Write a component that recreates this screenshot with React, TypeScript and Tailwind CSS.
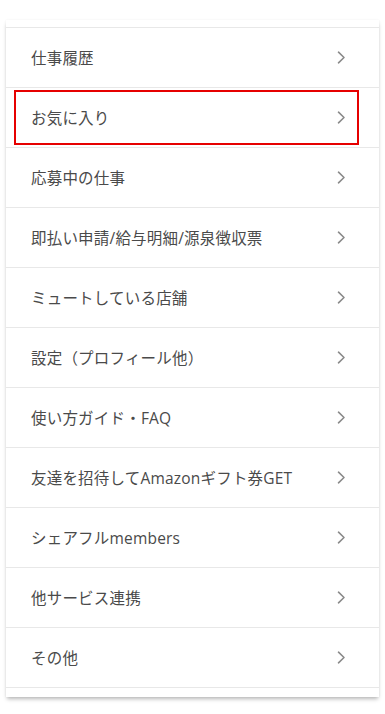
import React from 'react';

// menu rows in the account screen
const items: string[] = [
  '仕事履歴',
  'お気に入り',
  '応募中の仕事',
  '即払い申請/給与明細/源泉徴収票',
  'ミュートしている店舗',
  '設定（プロフィール他）',
  '使い方ガイド・FAQ',
  '友達を招待してAmazonギフト券GET',
  'シェアフルmembers',
  '他サービス連携',
  'その他',
];

const Chevron: React.FC = () => (
  <svg width="9" height="13" viewBox="0 0 9 13" fill="none" className="shrink-0">
    <path d="M1.5 1.2L7 6.5L1.5 11.8" stroke="#8a8a8a" strokeWidth="1.6" strokeLinecap="round" strokeLinejoin="round" />
  </svg>
);

const App: React.FC = () => (
  <div className="min-h-[714px] bg-white pt-[20px] pb-[17px]" style={{ fontFamily: '"Open Sans", "Noto Sans CJK JP", sans-serif' }}>
    <div className="mx-[6px] bg-white pt-[7px] pb-[9px] shadow-[0_3px_4px_-1px_rgba(0,0,0,0.28),0_0_2px_rgba(0,0,0,0.06)]">
      <ul className="border-b border-[#e8e8e8]">
        {items.map((label, i) => (
          <li key={label} className="relative flex h-[60px] items-center justify-between border-t border-[#e8e8e8] pl-[25px] pr-[33px]">
            <span className="pt-[2px] text-[15.5px] tracking-[0.2px] text-[#4a4a4a]">{label}</span>
            <Chevron />
            {i === 1 && (
              <div className="pointer-events-none absolute left-[8px] right-[20px] top-[2px] bottom-[2px] border-2 border-[#e60000]" />
            )}
          </li>
        ))}
      </ul>
    </div>
  </div>
);

export default App;
